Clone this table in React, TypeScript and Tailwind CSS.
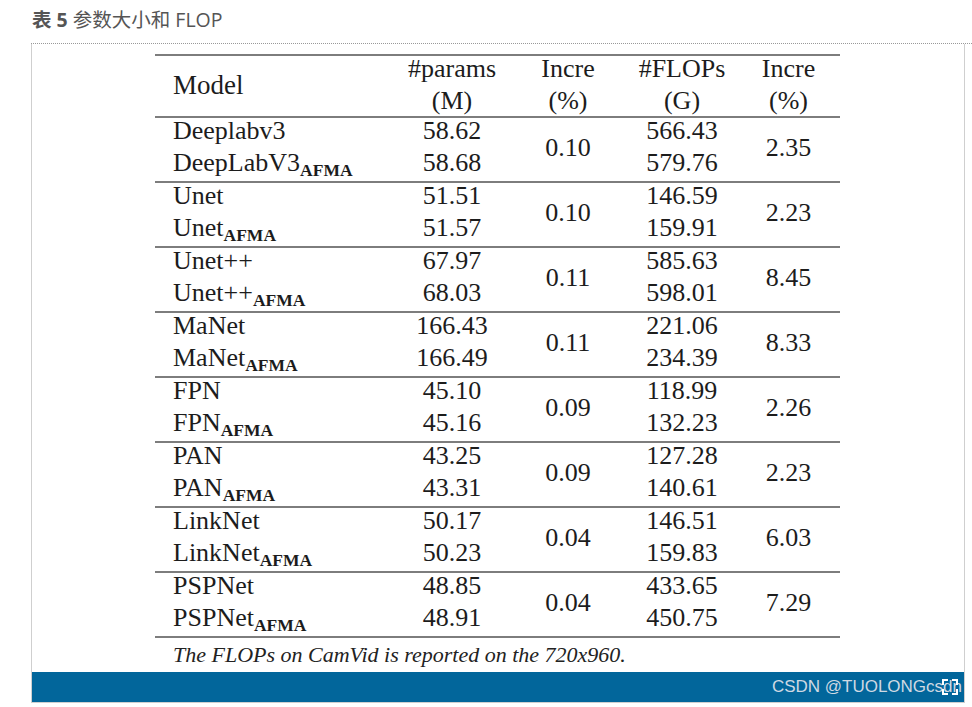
const rows = [
  { a: 'Deeplabv3', b: 'DeepLabV3', p: ['58.62', '58.68'], pi: '0.10', f: ['566.43', '579.76'], fi: '2.35' },
  { a: 'Unet', b: 'Unet', p: ['51.51', '51.57'], pi: '0.10', f: ['146.59', '159.91'], fi: '2.23' },
  { a: 'Unet++', b: 'Unet++', p: ['67.97', '68.03'], pi: '0.11', f: ['585.63', '598.01'], fi: '8.45' },
  { a: 'MaNet', b: 'MaNet', p: ['166.43', '166.49'], pi: '0.11', f: ['221.06', '234.39'], fi: '8.33' },
  { a: 'FPN', b: 'FPN', p: ['45.10', '45.16'], pi: '0.09', f: ['118.99', '132.23'], fi: '2.26' },
  { a: 'PAN', b: 'PAN', p: ['43.25', '43.31'], pi: '0.09', f: ['127.28', '140.61'], fi: '2.23' },
  { a: 'LinkNet', b: 'LinkNet', p: ['50.17', '50.23'], pi: '0.04', f: ['146.51', '159.83'], fi: '6.03' },
  { a: 'PSPNet', b: 'PSPNet', p: ['48.85', '48.91'], pi: '0.04', f: ['433.65', '450.75'], fi: '7.29' },
];

const cols = 'grid grid-cols-[240px_114px_118px_110px_103px]';

function Pair({ top, bottom, left }: { top: React.ReactNode; bottom: React.ReactNode; left?: boolean }) {
  return (
    <div className={`flex flex-col gap-[6px] ${left ? 'pl-[18px] text-left' : 'text-center'}`}>
      <div className="h-[26px] leading-[26px] whitespace-nowrap">{top}</div>
      <div className="h-[26px] leading-[26px] whitespace-nowrap">{bottom}</div>
    </div>
  );
}

function Afma({ name }: { name: string }) {
  return (
    <>
      {name}
      <span className="relative top-[5px] text-[17.5px] font-bold">AFMA</span>
    </>
  );
}

export default function App() {
  return (
    <div className="w-[972px] h-[707px] bg-white overflow-hidden">
      {/* Caption title */}
      <div className="pl-[32px] pt-[8px] h-[43px] text-[19.5px] leading-[24px] text-[#555] font-['Open_Sans','Noto_Sans_CJK_SC',sans-serif]">
        <span className="font-bold">表 5</span> 参数大小和 FLOP
      </div>

      <div className="ml-[31px] border-t border-dotted border-[#999]">
        <div className="w-[934px] border-l border-r border-b border-[#cfcfcf] pt-[10px]">
          {/* Table image */}
          <div className="ml-[123px] w-[685px] font-['Liberation_Serif',serif] text-[26px] text-[#1c1c1c]">
            <div className="border-t-2 border-[#7d7d7d]" />
            <div className={`${cols} h-[62px] pb-[4px] items-center border-b-2 border-[#7d7d7d]`}>
              <div className="pl-[18px] self-center text-[27px]">Model</div>
              <Pair top="#params" bottom="(M)" />
              <Pair top="Incre" bottom="(%)" />
              <Pair top="#FLOPs" bottom="(G)" />
              <Pair top="Incre" bottom="(%)" />
            </div>
            {rows.map((r) => (
              <div key={r.a} className={`${cols} h-[65px] pb-[5px] items-center border-b-2 border-[#7d7d7d]`}>
                <Pair left top={r.a} bottom={<Afma name={r.b} />} />
                <Pair top={r.p[0]} bottom={r.p[1]} />
                <div className="text-center">{r.pi}</div>
                <Pair top={r.f[0]} bottom={r.f[1]} />
                <div className="text-center">{r.fi}</div>
              </div>
            ))}
            <div className="pl-[18px] h-[34px] leading-[34px] italic text-[22px] text-[#222]">
              The FLOPs on CamVid is reported on the 720x960.
            </div>
          </div>

          {/* Footer watermark bar */}
          <div className="h-[30px] bg-[#02669b] flex items-center justify-end pr-[2px] relative">
            <span className="text-[17px] text-[#cfd9e3] font-['Liberation_Sans',sans-serif] whitespace-nowrap">
              CSDN @TUOLONGcsdn
            </span>
            <svg className="absolute right-[6px] top-[7px]" width="16" height="16" viewBox="0 0 16 16" fill="none" stroke="#fff" strokeWidth="2">
              <path d="M1 6V1h5M10 1h5v5M15 10v5h-5M6 15H1v-5" />
            </svg>
          </div>
        </div>
      </div>
    </div>
  );
}
